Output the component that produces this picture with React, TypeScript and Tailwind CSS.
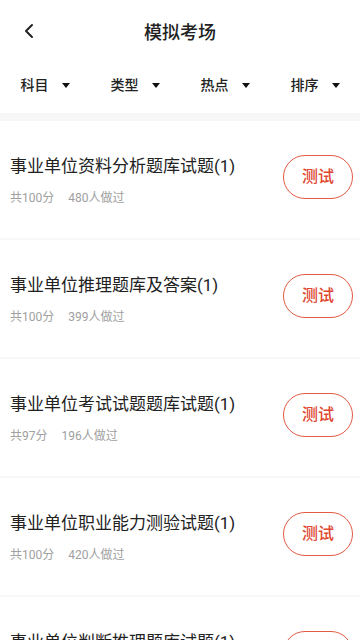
import { ChevronLeft } from 'lucide-react'

const filters = ['科目', '类型', '热点', '排序']

const exams = [
  { title: '事业单位资料分析题库试题(1)', score: 100, count: 480 },
  { title: '事业单位推理题库及答案(1)', score: 100, count: 399 },
  { title: '事业单位考试试题题库试题(1)', score: 97, count: 196 },
  { title: '事业单位职业能力测验试题(1)', score: 100, count: 420 },
  { title: '事业单位判断推理题库试题(1)', score: 100, count: 310 },
]

export default function App() {
  return (
    <div
      className="w-[360px] h-[640px] overflow-hidden bg-white"
      style={{ fontFamily: 'Roboto, "Noto Sans CJK SC", sans-serif' }}
    >
      {/* header */}
      <div className="relative flex h-[64px] items-center justify-center">
        <ChevronLeft className="absolute left-[17px] top-[19px] h-[24px] w-[24px] text-[#222]" strokeWidth={2} />
        <div className="text-[18px] font-medium text-[#222]">模拟考场</div>
      </div>

      {/* filters */}
      <div className="grid h-[49px] grid-cols-4 pt-[11px]">
        {filters.map((f) => (
          <div key={f} className="flex h-[20px] items-center justify-center gap-[13px]">
            <span className="text-[14px] font-medium leading-[20px] text-[#222]">{f}</span>
            <span className="h-0 w-0 border-x-[4.5px] border-t-[5px] border-x-transparent border-t-[#111]" />
          </div>
        ))}
      </div>

      <div className="h-[8px] bg-[#f7f7f7]" />

      {/* list */}
      <div>
        {exams.map((e) => (
          <div key={e.title} className="flex h-[119px] items-center border-b-2 border-[#f7f7f7] pl-[10px] pr-[7px]">
            <div className="flex-1 pt-[1px]">
              <div className="text-[17px] leading-[22px] text-[#222]">{e.title}</div>
              <div className="mt-[13px] flex gap-[14px] text-[12px] leading-[16px] text-[#a0a0a0]">
                <span>共{e.score}分</span>
                <span>{e.count}人做过</span>
              </div>
            </div>
            <button className="mb-[5px] flex h-[44px] w-[70px] items-center justify-center rounded-full border-[1.5px] border-[#e35a45] text-[16px] font-medium text-[#e0452f]">
              测试
            </button>
          </div>
        ))}
      </div>
    </div>
  )
}
